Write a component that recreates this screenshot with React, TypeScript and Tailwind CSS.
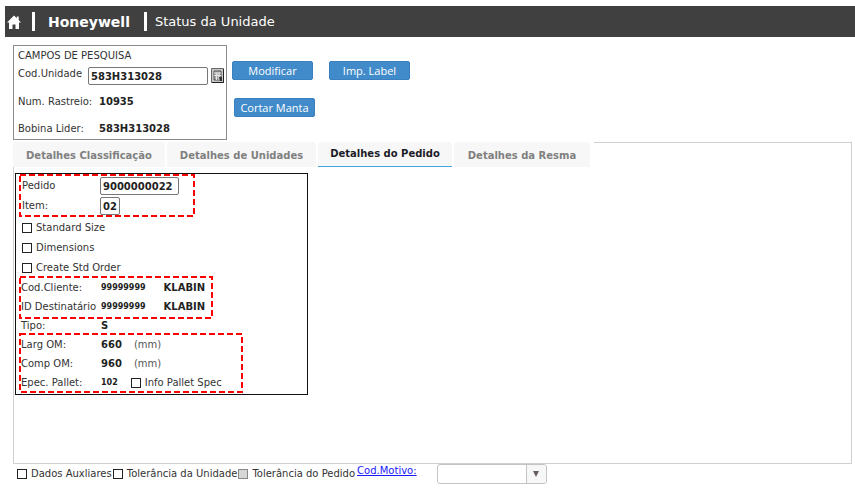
import type { ReactNode } from "react";

const searchLabel = "w-[81px] shrink-0 whitespace-nowrap";
const checkboxClass =
  "m-0 size-[10px] shrink-0 appearance-none border border-[#222] bg-white checked:bg-[#333] disabled:border-[#888] disabled:bg-[#d6d6d6]";
const fieldClass = "h-[18px] rounded-[2px] border border-[#767676] px-[2px] font-bold text-[#222]";
const actionButton =
  "h-[19px] w-[81px] rounded-[2px] border border-[#3a80bf] bg-[#428bca] text-center font-['Open_Sans','Noto_Sans',sans-serif] text-[11px] leading-[16px] font-medium whitespace-nowrap text-white";

function Check({ label, disabled = false }: { label: string; disabled?: boolean }) {
  return (
    <label className="flex items-center gap-1 whitespace-nowrap">
      <input type="checkbox" disabled={disabled} className={checkboxClass} />
      {label}
    </label>
  );
}

function Highlight({ className, children }: { className: string; children: ReactNode }) {
  return (
    <div className={`relative ml-1 pt-px ${className}`}>
      {children}
      <svg className="pointer-events-none absolute inset-0 size-full overflow-visible" aria-hidden="true">
        <rect width="100%" height="100%" fill="none" stroke="#ff0000" strokeWidth="2" strokeDasharray="6 3" />
      </svg>
    </div>
  );
}

function Row({ label, value, small = false, children }: { label: string; value: string; small?: boolean; children?: ReactNode }) {
  return (
    <div className="flex h-[19px] items-center pl-px whitespace-nowrap">
      <span className="w-[80px] shrink-0">{label}</span>
      <span className={`font-bold text-[#222] ${small ? "text-[8px]" : ""}`}>{value}</span>
      {children}
    </div>
  );
}

const tabs = [
  { label: "Detalhes Classificação", width: "w-[152px]" },
  { label: "Detalhes de Unidades", width: "w-[149px]" },
  { label: "Detalhes do Pedido", width: "w-[134px]", active: true },
  { label: "Detalhes da Resma", width: "w-[136px]" },
];

export default function App() {
  return (
    <div className="bg-white pt-[6px] font-['DejaVu_Sans',Verdana,sans-serif] text-[10px] leading-[14px] text-[#333]">
      <header className="ml-[5px] flex h-[31px] items-center bg-[#404040] pl-[2px] text-white">
        <a href="#" aria-label="Início">
          <svg viewBox="0 0 14 14" className="size-[14px]" fill="white" aria-hidden="true">
            <path d="M7 0.5 0 7.5h2V14h3.5V9.5h3V14H12V7.5h2L11.7 5V1.5H9.8v1.7z" />
          </svg>
        </a>
        <span className="ml-[11px] h-[19px] w-[3px] bg-white" />
        <span className="ml-[13px] text-[14px] font-bold">Honeywell</span>
        <span className="ml-[14px] h-[19px] w-[3px] bg-white" />
        <h1 className="ml-[8px] text-[13px]">Status da Unidade</h1>
      </header>

      <div className="mt-2 flex pl-[13px]">
        <section className="h-[95px] w-[214px] shrink-0 border border-[#8a8a8a] pt-[3px] pl-1">
          <h2>CAMPOS DE PESQUISA</h2>
          <div className="flex h-[26px] items-center">
            <label htmlFor="unidade" className="w-[70px] shrink-0 pb-1">Cod.Unidade</label>
            <input id="unidade" defaultValue="583H313028" className={`${fieldClass} w-[120px]`} />
            <button type="button" aria-label="Buscar unidade" className="ml-[3px] pb-[2px]">
              <svg viewBox="0 0 13 15" className="block h-[15px] w-[13px]" aria-hidden="true">
                <path d="M0.5 0.5h12v14h-12z" fill="#c8c8c8" stroke="#666" />
                <path d="M12.5 1v13.5H1" fill="none" stroke="#222" />
                <path d="M3 3h7v9H3z" fill="#aaa" stroke="#555" />
                <path d="M3 5h7M3 7.5h7M5.5 5v7M8 5v7" stroke="#e4e4e4" />
                <path d="M8 9h3v4h-2z" fill="#333" />
              </svg>
            </button>
          </div>
          <div className="mt-[3px] flex h-[20px] items-center">
            <span className={searchLabel}>Num. Rastreio:</span>
            <b className="text-[#222]">10935</b>
          </div>
          <div className="mt-[7px] flex h-[20px] items-center">
            <span className={searchLabel}>Bobina Lider:</span>
            <b className="text-[#222]">583H313028</b>
          </div>
        </section>
        <div className="flex flex-col gap-[18px] pt-4 pl-[5px]">
          <div className="flex gap-4">
            <button type="button" className={actionButton}>Modificar</button>
            <button type="button" className={actionButton}>Imp. Label</button>
          </div>
          <div className="pl-[2px]">
            <button type="button" className={actionButton}>Cortar Manta</button>
          </div>
        </div>
      </div>

      <main className="mt-[2px] mr-[3px] ml-[13px]">
        <div className="flex">
          <div role="tablist" className="flex shrink-0 gap-[2px]">
            {tabs.map((tab) => (
              <button
                key={tab.label}
                type="button"
                role="tab"
                aria-selected={!!tab.active}
                className={`h-[25px] rounded-t-[3px] bg-[#f7f7f7] font-bold whitespace-nowrap ${tab.width} ${
                  tab.active ? "border-b border-[#45a5dd] text-[#1c1c28]" : "pt-[2px] text-[#808080]"
                }`}
              >
                {tab.label}
              </button>
            ))}
          </div>
          <div className="ml-1 grow border-t border-r border-[#d0d0d0]" />
        </div>

        <div className="border-r border-b border-l border-[#d0d0d0] pt-[6px] pb-[68px] pl-[1px]">
          <section className="w-[293px] border border-[#111] pt-px pb-[2px]">
            <Highlight className="h-[41px] w-[174px] pl-[2px]">
              <div className="flex h-[20px] items-center">
                <label htmlFor="pedido" className="w-[78px] shrink-0">Pedido</label>
                <input id="pedido" defaultValue="9000000022" className={`${fieldClass} w-[79px]`} />
              </div>
              <div className="flex h-[20px] items-center">
                <label htmlFor="item" className="w-[78px] shrink-0">Item:</label>
                <input id="item" defaultValue="02" className={`${fieldClass} w-[20px]`} />
              </div>
            </Highlight>
            <div className="grid auto-rows-[20px] pt-[2px] pl-[6px]">
              <Check label="Standard Size" />
              <Check label="Dimensions" />
              <Check label="Create Std Order" />
            </div>
            <Highlight className="-mt-px h-[41px] w-[192px]">
              <Row label="Cod.Cliente:" value="99999999" small>
                <b className="ml-[18px] text-[#222]">KLABIN</b>
              </Row>
              <Row label="ID Destinatário" value="99999999" small>
                <b className="ml-[18px] text-[#222]">KLABIN</b>
              </Row>
            </Highlight>
            <div className="-mt-[2px] ml-1">
              <Row label="Tipo:" value="S" />
            </div>
            <Highlight className="-mt-px h-[58px] w-[222px]">
              <Row label="Larg OM:" value="660">
                <span className="ml-3 text-[#555]">(mm)</span>
              </Row>
              <Row label="Comp OM:" value="960">
                <span className="ml-3 text-[#555]">(mm)</span>
              </Row>
              <Row label="Epec. Pallet:" value="102" small>
                <span className="ml-[13px]">
                  <Check label="Info Pallet Spec" />
                </span>
              </Row>
            </Highlight>
          </section>
        </div>
      </main>

      <footer className="flex h-[20px] items-center gap-px pl-[17px]">
        <Check label="Dados Auxliares" />
        <Check label="Tolerância da Unidade" />
        <Check label="Tolerância do Pedido" disabled />
        <a href="#" id="motivo-label" className="pb-[6px] pl-px whitespace-nowrap text-[#1a1aff] underline">Cod.Motivo:</a>
        <div className="relative ml-[19px] h-[20px] w-[110px]">
          <select
            aria-labelledby="motivo-label"
            className="size-full appearance-none rounded-[3px] border border-[#c4c4c4] bg-white"
          >
            <option value=""></option>
          </select>
          <span className="pointer-events-none absolute inset-y-px right-px flex w-[20px] items-center justify-center rounded-r-[3px] border-l border-[#c4c4c4] bg-[#f7f7f7]">
            <svg viewBox="0 0 6 6" className="size-[6px]" aria-hidden="true">
              <path d="M0 0h6L3 6z" fill="#665c58" />
            </svg>
          </span>
        </div>
      </footer>
    </div>
  );
}
